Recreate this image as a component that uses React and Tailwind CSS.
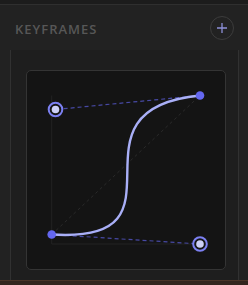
import React from 'react';

// bezier editor points, in card coordinates (198x198 inner box)
const p0 = { x: 24.7, y: 163.5 };
const p1 = { x: 173, y: 173 };
const p2 = { x: 28.5, y: 38.5 };
const p3 = { x: 173, y: 24.5 };

const Handle = ({ x, y }) => (
    <g>
        <circle cx={x} cy={y} r="6.8" fill="#141414" stroke="#7c80f2" strokeWidth="2" />
        <circle cx={x} cy={y} r="3.8" fill="#cdd0f7" />
    </g>
);

const CurveGraph = () => (
    <svg className="block w-full h-full" viewBox="0 0 198 198">
        {/* axes */}
        <line x1={p0.x} y1={p3.y} x2={p0.x} y2={p1.y} stroke="#232323" strokeWidth="1" />
        <line x1={p0.x} y1={p1.y} x2={p1.x} y2={p1.y} stroke="#232323" strokeWidth="1" />
        {/* linear reference */}
        <line x1={p0.x} y1={p0.y} x2={p3.x} y2={p3.y} stroke="#ffffff" strokeOpacity="0.12" strokeWidth="0.8" strokeDasharray="3 3" />
        {/* handle arms */}
        <line x1={p0.x} y1={p0.y} x2={p1.x} y2={p1.y} stroke="#6366f1" strokeOpacity="0.65" strokeWidth="1.2" strokeDasharray="4 3" />
        <line x1={p3.x} y1={p3.y} x2={p2.x} y2={p2.y} stroke="#6366f1" strokeOpacity="0.65" strokeWidth="1.2" strokeDasharray="4 3" />
        <path
            d={`M ${p0.x} ${p0.y} C ${p1.x} ${p1.y}, ${p2.x} ${p2.y}, ${p3.x} ${p3.y}`}
            fill="none"
            stroke="#a9aff7"
            strokeWidth="2.4"
            strokeLinecap="round"
        />
        <circle cx={p0.x} cy={p0.y} r="4.3" fill="#6467f0" />
        <circle cx={p3.x} cy={p3.y} r="4.3" fill="#6467f0" />
        <Handle x={p1.x} y={p1.y} />
        <Handle x={p2.x} y={p2.y} />
    </svg>
);

const App = () => {
    return (
        <div className="w-[248px] h-[285px] flex flex-col bg-[#1c1c1c] overflow-hidden" style={{ fontFamily: '"Open Sans", Inter, sans-serif' }}>
            <div className="h-[5px] shrink-0 bg-[#1c1c1c] border-b border-[#2f2f2f]"></div>
            <div className="flex-1 flex flex-col bg-[#222222]">
                <div className="h-[45px] shrink-0 flex items-center justify-between pl-[15px] pr-[14px] pt-[1px]">
                    <span className="text-[13px] font-semibold tracking-[1px] text-[#575757] leading-none pt-[3px]">KEYFRAMES</span>
                    <button className="w-[24px] h-[24px] rounded-full border border-[#3c3c3c] flex items-center justify-center">
                        <svg width="12" height="12" viewBox="0 0 12 12">
                            <path d="M6 1 V11 M1 6 H11" stroke="#8d90d8" strokeWidth="1.3" />
                        </svg>
                    </button>
                </div>
                <div className="flex-1 ml-[10px] w-[229px] border-x border-[#313131] bg-[#1e1e1e] pt-[20px] pl-[15px]">
                    <div className="w-[200px] h-[200px] rounded-[5px] border border-[#343434] bg-[#141414]">
                        <CurveGraph />
                    </div>
                </div>
            </div>
            <div className="h-[5px] shrink-0 bg-[#33251e] border-t border-[#4a3428]"></div>
        </div>
    );
};

export default App;
